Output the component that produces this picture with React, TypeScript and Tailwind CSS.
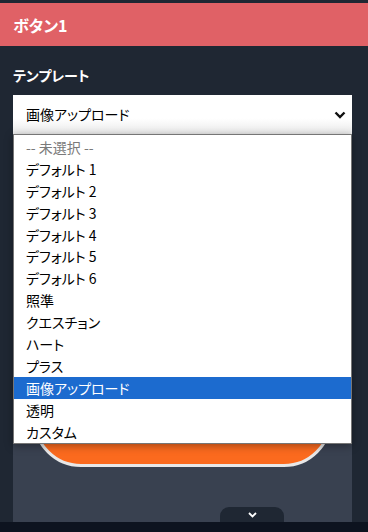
import React from "react";

const items = [
  "-- 未選択 --",
  "デフォルト 1",
  "デフォルト 2",
  "デフォルト 3",
  "デフォルト 4",
  "デフォルト 5",
  "デフォルト 6",
  "照準",
  "クエスチョン",
  "ハート",
  "プラス",
  "画像アップロード",
  "透明",
  "カスタム",
];

const font = "font-['Noto_Sans_CJK_JP','Noto_Sans',sans-serif] [font-feature-settings:'palt']";

export default function App() {
  return (
    <div className={`relative w-[368px] h-[532px] bg-[#1f2733] flex flex-col overflow-hidden ${font}`}>
      <div className="h-[3px] shrink-0" />
      <div className="h-[43px] shrink-0 bg-[#e06166] flex items-center px-[13px]">
        <span className="text-white font-bold text-[16px] leading-none">ボタン1</span>
      </div>
      <div className="flex-1 flex flex-col px-[13px] pr-[16px]">
        <div className="h-[20px] mt-[19px] flex items-center text-white font-bold text-[14px] leading-none">
          テンプレート
        </div>
        <div className="mt-[10px] h-[39px] bg-gradient-to-b from-white from-60% to-[#e9e9e9] flex items-center justify-between pl-[13px] pr-[5px] text-[14px] text-black">
          <span>画像アップロード</span>
          <svg width="12" height="8" viewBox="0 0 12 8" className="mr-[1px]">
            <path d="M1.5 1.5 L6 6 L10.5 1.5" fill="none" stroke="#111" strokeWidth="2.4" />
          </svg>
        </div>
        <div className="mt-[20px] flex-1 bg-[#394150] relative flex flex-col justify-end items-end">
          <div className="absolute left-[20px] right-[20px] bottom-[55px] h-[110px] rounded-[48px] border-[3px] border-[#e8e8e8] bg-gradient-to-b from-[#c8501a] via-[#fb6a1e] via-30% to-[#fb6a1e]" />
          <div className="mr-[68px] w-[64px] h-[15px] rounded-t-[9px] bg-[#1f2733] flex items-center justify-center">
            <svg width="9" height="6" viewBox="0 0 9 6">
              <path d="M1 1 L4.5 4.5 L8 1" fill="none" stroke="#ffffff" strokeWidth="1.8" />
            </svg>
          </div>
        </div>
      </div>
      <div className="h-[10px] shrink-0 bg-[#0d131f]" />

      <div className="absolute left-[13px] top-[134px] w-[339px] bg-white border border-[#767676] shadow-[0_2px_8px_rgba(0,0,0,0.35)] py-[1px]">
        {items.map((it, i) => {
          const selected = it === "画像アップロード";
          const gray = i === 0;
          return (
            <div
              key={it}
              className={`h-[21.9px] flex items-center pl-[12px] text-[14px] leading-none ${
                selected ? "bg-[#1c6bcf] text-white" : gray ? "text-[#7a7a7a]" : "text-black"
              }`}
            >
              {it}
            </div>
          );
        })}
      </div>
    </div>
  );
}
